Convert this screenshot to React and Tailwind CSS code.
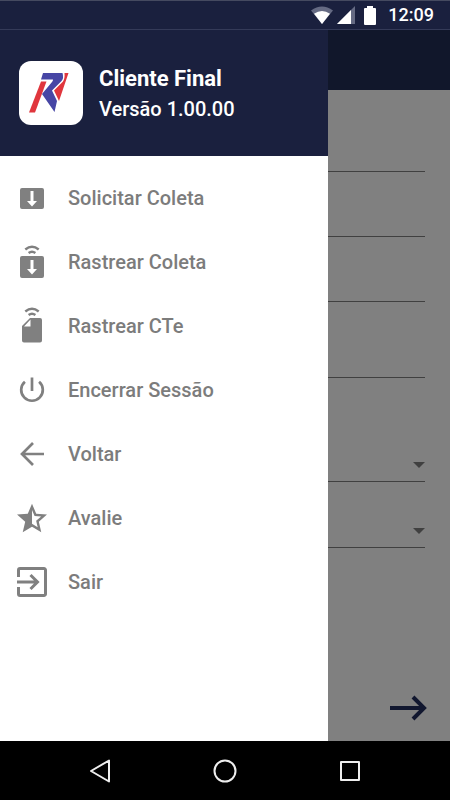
import clsx from 'clsx';

function Logo() {
  return (
    <svg viewBox="0 0 64 64" className="w-16 h-16" aria-hidden="true">
      <path d="M22 20.500h5.500L16 51.500h-6z" fill="#e0363d" />
      <path d="M45.500 12H49.500L40 40l-5-10.500 9-9q2-3 1.500-8.500z" fill="#e0363d" />
      <path d="M24 12h19.500q1.500 5-1 8L33 29.500 38 40l-2.500 11L23 33l10-12q1-1 1-2.500H22z" fill="#4746a5" />
    </svg>
  );
}

function BoxIcon() {
  return (
    <svg viewBox="0 0 32 40" className="w-8 h-10 shrink-0" fill="#808080" aria-hidden="true">
      <path
        fillRule="evenodd"
        d="M6 10h20a2 2 0 0 1 2 2v17a2 2 0 0 1-2 2H6a2 2 0 0 1-2-2V12a2 2 0 0 1 2-2zm8.500 3v10H11l5 5.500 5-5.500h-3.500V13z"
      />
    </svg>
  );
}

function Waves() {
  return (
    <g fill="none" stroke="#808080" strokeWidth="2.400">
      <path d="M9.300 7.500q6.700-5.500 13.400 0" />
      <path d="M12.600 11q3.400-2.500 6.800 0" />
    </g>
  );
}

function BoxTrackIcon() {
  return (
    <svg viewBox="0 0 32 40" className="w-8 h-10 shrink-0" fill="#808080" aria-hidden="true">
      <Waves />
      <path
        fillRule="evenodd"
        d="M6 14h20a2 2 0 0 1 2 2v18a2 2 0 0 1-2 2H6a2 2 0 0 1-2-2V16a2 2 0 0 1 2-2zm8.500 4v9H11l5 5.500 5-5.500h-3.500v-9z"
      />
    </svg>
  );
}

function DocTrackIcon() {
  return (
    <svg viewBox="0 0 32 40" className="w-8 h-10 shrink-0" fill="#808080" aria-hidden="true">
      <g transform="translate(0 -2)">
        <Waves />
      </g>
      <path
        fillRule="evenodd"
        d="M14 12h10a2 2 0 0 1 2 2v20.500a2 2 0 0 1-2 2H8a2 2 0 0 1-2-2V20zm.500 1.500L8 20.500h6.500z"
      />
    </svg>
  );
}

function PowerIcon() {
  return (
    <svg viewBox="0 0 32 40" className="w-8 h-10 shrink-0" fill="none" stroke="#808080" strokeWidth="2.700" aria-hidden="true">
      <path d="M16 7.500V21M8.900 11.800a10.800 10.800 0 1 0 14.200 0" />
    </svg>
  );
}

function BackIcon() {
  return (
    <svg viewBox="0 0 32 40" className="w-8 h-10 shrink-0" fill="none" stroke="#808080" strokeWidth="2.700" aria-hidden="true">
      <path d="M28 20H6M17 9L6 20l11 11" />
    </svg>
  );
}

function StarIcon() {
  return (
    <svg viewBox="1.333 -1.833 21.333 26.667" className="w-8 h-10 shrink-0" fill="#808080" aria-hidden="true">
      <path d="M22 9.240l-7.190-.62L12 2 9.190 8.630 2 9.240l5.460 4.730L5.820 21 12 17.270 18.180 21l-1.630-7.030L22 9.240zM12 15.400V6.100l1.710 4.040 4.380.38-3.320 2.880 1 4.280L12 15.400z" />
    </svg>
  );
}

function ExitIcon() {
  return (
    <svg viewBox="0 0 32 40" className="w-8 h-10 shrink-0" fill="none" stroke="#808080" strokeWidth="3" aria-hidden="true">
      <path d="M2.500 15V8a1.500 1.500 0 0 1 1.500-1.500h24A1.500 1.500 0 0 1 29.500 8v24a1.500 1.500 0 0 1-1.500 1.500H4A1.500 1.500 0 0 1 2.500 32v-7M1 20h20M14.500 13l7 7-7 7" />
    </svg>
  );
}

const menu = [
  { label: 'Solicitar Coleta', Icon: BoxIcon },
  { label: 'Rastrear Coleta', Icon: BoxTrackIcon },
  { label: 'Rastrear CTe', Icon: DocTrackIcon },
  { label: 'Encerrar Sessão', Icon: PowerIcon },
  { label: 'Voltar', Icon: BackIcon },
  { label: 'Avalie', Icon: StarIcon },
  { label: 'Sair', Icon: ExitIcon },
];

const fields = [
  { label: 'Campo 1', size: 'h-[65px]' },
  { label: 'Campo 2', size: 'h-[65px]' },
  { label: 'Campo 3', size: 'h-[65px]' },
  { label: 'Campo 4', size: 'h-[76px]' },
];

function StatusBar() {
  return (
    <header className="h-[30px] flex items-center justify-end pr-4 bg-[#1a203e] border-t border-t-[#454a60] border-b border-b-[#343a58]">
      <svg viewBox="0 0 22 18" className="w-[22px] h-[18px]" aria-hidden="true">
        <path d="M0 4.500Q11-3.500 22 4.500L11 18z" fill="#656a83" />
        <path d="M3 7.800Q11 2 19 7.800L11 18z" fill="#fff" />
      </svg>
      <svg viewBox="0 0 18 18" className="w-[18px] h-[18px] ml-1" aria-hidden="true">
        <path d="M18 0v18H0z" fill="#656a83" />
        <path d="M14 4v14H0z" fill="#fff" />
      </svg>
      <svg viewBox="0 0 12 19" className="w-3 h-[19px] ml-[9px]" fill="#fff" aria-hidden="true">
        <path d="M3 0h6v2h2a1 1 0 0 1 1 1v15a1 1 0 0 1-1 1H1a1 1 0 0 1-1-1V3a1 1 0 0 1 1-1h2z" />
      </svg>
      <span className="ml-3 text-[18px] leading-6 font-medium text-white">12:09</span>
    </header>
  );
}

function Drawer() {
  return (
    <aside className="w-[328px] shrink-0 bg-white">
      <div className="h-[126px] flex items-center gap-4 pl-[19px] bg-[#1a203e]">
        <div className="rounded-xl bg-white">
          <Logo />
        </div>
        <div className="pt-[2px] text-white">
          <h1 className="text-[22px] leading-[30px] font-bold">Cliente Final</h1>
          <p className="text-[20px] leading-[30px] font-medium">Versão 1.00.00</p>
        </div>
      </div>
      <nav className="pt-[10px]">
        {menu.map(({ label, Icon }) => (
          <a key={label} href="#" className="h-16 flex items-center gap-5 pl-4 text-[20px] leading-6 font-medium text-[#7c7c7c]">
            <Icon />
            <span>{label}</span>
          </a>
        ))}
      </nav>
    </aside>
  );
}

function Dropdown({ label }) {
  return (
    <div className="w-full h-[34px] grid items-center border-b border-[#404040]">
      <select aria-label={label} className="col-start-1 row-start-1 w-full h-full appearance-none bg-transparent outline-none">
        <option></option>
      </select>
      <svg viewBox="0 0 12 6" className="col-start-1 row-start-1 justify-self-end w-3 h-[6px] pointer-events-none" fill="#404040" aria-hidden="true">
        <path d="M0 0h12L6 6z" />
      </svg>
    </div>
  );
}

function Form() {
  return (
    <main className="flex-1 min-w-0 flex flex-col bg-[#808080]">
      <div className="h-[60px] bg-[#11172b]" />
      <form className="flex-1 flex flex-col pt-[17px] pr-[25px]">
        {fields.map(({ label, size }) => (
          <input
            key={label}
            type="text"
            aria-label={label}
            className={clsx('w-full bg-transparent border-b border-[#404040] outline-none', size)}
          />
        ))}
        <div className="h-[104px] flex items-end">
          <Dropdown label="Lista 1" />
        </div>
        <div className="h-[66px] flex items-end">
          <Dropdown label="Lista 2" />
        </div>
        <button type="button" aria-label="Avançar" className="mt-auto mb-[19px] -mr-1 self-end">
          <svg viewBox="0 0 40 28" className="w-10 h-7" fill="none" stroke="#11172f" strokeWidth="4" aria-hidden="true">
            <path d="M1 14h34M24 3l11 11-11 11" />
          </svg>
        </button>
      </form>
    </main>
  );
}

function NavBar() {
  return (
    <footer className="h-[59px] grid grid-cols-3 place-items-center px-[37px] bg-black">
      <button type="button" aria-label="Voltar">
        <svg viewBox="0 0 26 26" className="w-[26px] h-[26px]" fill="none" stroke="#eee" strokeWidth="2" strokeLinejoin="round" aria-hidden="true">
          <path d="M22 2.500v21L4 13z" />
        </svg>
      </button>
      <button type="button" aria-label="Início">
        <svg viewBox="0 0 26 26" className="w-[26px] h-[26px]" fill="none" stroke="#eee" strokeWidth="2" aria-hidden="true">
          <circle cx="13" cy="13" r="10.500" />
        </svg>
      </button>
      <button type="button" aria-label="Recentes">
        <svg viewBox="0 0 26 26" className="w-[26px] h-[26px]" fill="none" stroke="#eee" strokeWidth="2" strokeLinejoin="round" aria-hidden="true">
          <path d="M4 4h18v18H4z" />
        </svg>
      </button>
    </footer>
  );
}

export default function App() {
  return (
    <div className="min-h-screen flex flex-col font-['Roboto',sans-serif]">
      <StatusBar />
      <div className="flex-1 flex">
        <Drawer />
        <Form />
      </div>
      <NavBar />
    </div>
  );
}
